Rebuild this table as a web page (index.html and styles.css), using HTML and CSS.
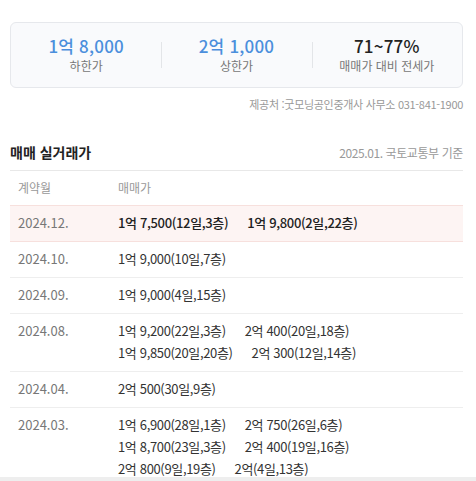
FILE: index.html
```html
<!DOCTYPE html>
<html lang="ko">
<head>
<meta charset="utf-8">
<link rel="stylesheet" href="styles.css">
</head>
<body>
<div class="page">
  <div class="summary">
    <div class="stat">
      <div class="stat-value blue">1억 8,000</div>
      <div class="stat-label">하한가</div>
    </div>
    <div class="stat divided">
      <div class="stat-value blue">2억 1,000</div>
      <div class="stat-label">상한가</div>
    </div>
    <div class="stat divided">
      <div class="stat-value">71~77%</div>
      <div class="stat-label">매매가 대비 전세가</div>
    </div>
  </div>
  <div class="source">제공처 :굿모닝공인중개사 사무소 031-841-1900</div>

  <div class="section-head">
    <h2 class="title">매매 실거래가</h2>
    <span class="basis">2025.01. 국토교통부 기준</span>
  </div>

  <div class="table">
    <div class="row head">
      <div class="c-date">계약월</div>
      <div class="c-price">매매가</div>
    </div>
    <div class="row hl">
      <div class="c-date">2024.12.</div>
      <div class="c-price">
        <div class="line"><span>1억 7,500(12일,3층)</span><span>1억 9,800(2일,22층)</span></div>
      </div>
    </div>
    <div class="row">
      <div class="c-date">2024.10.</div>
      <div class="c-price"><div class="line"><span>1억 9,000(10일,7층)</span></div></div>
    </div>
    <div class="row">
      <div class="c-date">2024.09.</div>
      <div class="c-price"><div class="line"><span>1억 9,000(4일,15층)</span></div></div>
    </div>
    <div class="row">
      <div class="c-date">2024.08.</div>
      <div class="c-price">
        <div class="line"><span>1억 9,200(22일,3층)</span><span>2억 400(20일,18층)</span></div>
        <div class="line"><span>1억 9,850(20일,20층)</span><span>2억 300(12일,14층)</span></div>
      </div>
    </div>
    <div class="row">
      <div class="c-date">2024.04.</div>
      <div class="c-price"><div class="line"><span>2억 500(30일,9층)</span></div></div>
    </div>
    <div class="row">
      <div class="c-date">2024.03.</div>
      <div class="c-price">
        <div class="line"><span>1억 6,900(28일,1층)</span><span>2억 750(26일,6층)</span></div>
        <div class="line"><span>1억 8,700(23일,3층)</span><span>2억 400(19일,16층)</span></div>
        <div class="line"><span>2억 800(9일,19층)</span><span>2억(4일,13층)</span></div>
      </div>
    </div>
  </div>
</div>
<div class="bottom-bar"></div>
</body>
</html>
```

FILE: styles.css
```css
* { box-sizing: border-box; }
html, body { margin: 0; padding: 0; background: #fff; }
body {
  font-family: "Noto Sans CJK KR", "Noto Sans", sans-serif;
  color: #333;
}
.page { padding: 22px 13px 0 10px; }

.summary {
  display: grid;
  grid-template-columns: 1fr 1fr 1fr;
  height: 66px;
  border: 1px solid #e6e8ec;
  border-radius: 6px;
  background: #f9fafc;
  padding-top: 12px;
}
.stat { position: relative; text-align: center; }
.stat.divided::before {
  content: "";
  position: absolute;
  left: 0;
  top: 7px;
  height: 26px;
  border-left: 1px solid #e3e5e8;
}
.stat-value {
  font-size: 17px;
  line-height: 22px;
  font-weight: 500;
  color: #222;
  letter-spacing: 0.2px;
}
.stat-value.blue { color: #4b8fdc; }
.stat-label {
  font-size: 12px;
  line-height: 17px;
  color: #777;
}

.source {
  margin-top: 8px;
  text-align: right;
  font-size: 11px;
  line-height: 16px;
  color: #999;
  letter-spacing: -0.3px;
}

.section-head {
  display: flex;
  justify-content: space-between;
  align-items: center;
  margin-top: 30px;
  margin-bottom: 8px;
  height: 20px;
}
.title {
  margin: 0;
  font-size: 14px;
  font-weight: 700;
  color: #222;
}
.basis {
  font-size: 12px;
  color: #999;
  letter-spacing: -0.4px;
}

.table { border-top: 1px solid #e8e8e8; }
.row {
  display: flex;
  border-top: 1px solid #eeeeee;
  padding: 6px 0 7px;
  font-size: 13px;
  line-height: 22px;
}
.table .row:first-child { border-top: 0; }
.c-date { width: 108px; padding-left: 8px; color: #777; flex: none; }
.c-price { color: #333; letter-spacing: -0.35px; }
.line { display: flex; column-gap: 19px; white-space: nowrap; }
.row.head { padding: 6px 0 6px; font-size: 12px; }
.row.head .c-date, .row.head .c-price { color: #999; letter-spacing: 0; }
.row.hl {
  background: #fdf4f3;
  border-top-color: #f7e0dd;
  border-bottom: 1px solid #f7e0dd;
}
.row.hl + .row { border-top: 0; }
.row.hl .c-price { color: #222; font-weight: 500; }

.bottom-bar {
  position: fixed;
  left: 0;
  right: 0;
  bottom: 0;
  height: 4px;
  background: #eeeeee;
}
```
